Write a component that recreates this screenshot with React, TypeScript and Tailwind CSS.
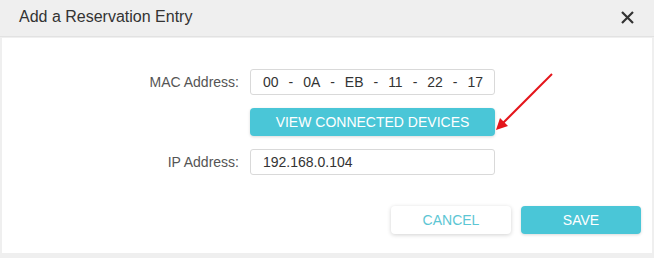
import React from "react";

export default function App() {
  const mac = ["00", "0A", "EB", "11", "22", "17"];
  return (
    <div className="relative w-[654px] h-[258px] bg-[#efefef] font-['Liberation_Sans',Arial,sans-serif] overflow-hidden">
      <div className="h-[37px] flex items-center justify-between pl-[19px] pr-[20px] border-b border-[#e2e2e2]">
        <span className="text-[16px] text-[#333] mt-[-2px]">Add a Reservation Entry</span>
        <svg width="13" height="13" viewBox="0 0 13 13" className="mt-[-2px]">
          <path d="M1 1L12 12M12 1L1 12" stroke="#333" strokeWidth="2.2" />
        </svg>
      </div>
      <div className="mx-[2px] mt-[1px] h-[215px] bg-white pt-[31px]">
        <div className="flex items-center">
          <div className="w-[237px] text-right text-[14px] text-[#555]">MAC Address:</div>
          <div className="ml-[11px] w-[245px] h-[26px] border border-[#d9d9d9] rounded-[3px] flex items-center justify-between pl-[12px] pr-[11px] text-[14px] text-[#333]">
            {mac.map((m, i) => (
              <React.Fragment key={i}>
                <span>{m}</span>
                {i < mac.length - 1 && <span>-</span>}
              </React.Fragment>
            ))}
          </div>
        </div>
        <div className="flex mt-[13px]">
          <div className="ml-[248px] w-[245px] h-[28px] rounded-[4px] bg-[#4ac6d7] shadow-[0_1px_3px_rgba(0,0,0,0.15)] flex items-center justify-center text-white text-[14px]">
            VIEW CONNECTED DEVICES
          </div>
        </div>
        <div className="flex items-center mt-[13px]">
          <div className="w-[237px] text-right text-[14px] text-[#555]">IP Address:</div>
          <div className="ml-[11px] w-[245px] h-[26px] border border-[#d9d9d9] rounded-[3px] flex items-center pl-[12px] text-[14px] text-[#333]">
            192.168.0.104
          </div>
        </div>
        <div className="flex mt-[31px] pl-[389px] gap-[10px]">
          <div className="w-[120px] h-[28px] rounded-[4px] bg-white shadow-[0_1px_4px_rgba(0,0,0,0.18)] flex items-center justify-center text-[14px] text-[#5cc6d4]">
            CANCEL
          </div>
          <div className="w-[120px] h-[28px] rounded-[4px] bg-[#4ac6d7] shadow-[0_1px_3px_rgba(0,0,0,0.15)] flex items-center justify-center text-[14px] text-white">
            SAVE
          </div>
        </div>
      </div>
      <svg className="absolute left-0 top-0" width="654" height="258">
        <line x1="552" y1="74" x2="503" y2="123" stroke="#e4151b" strokeWidth="2" />
        <polygon points="496,130 500,118 508,126" fill="#e4151b" />
      </svg>
    </div>
  );
}
